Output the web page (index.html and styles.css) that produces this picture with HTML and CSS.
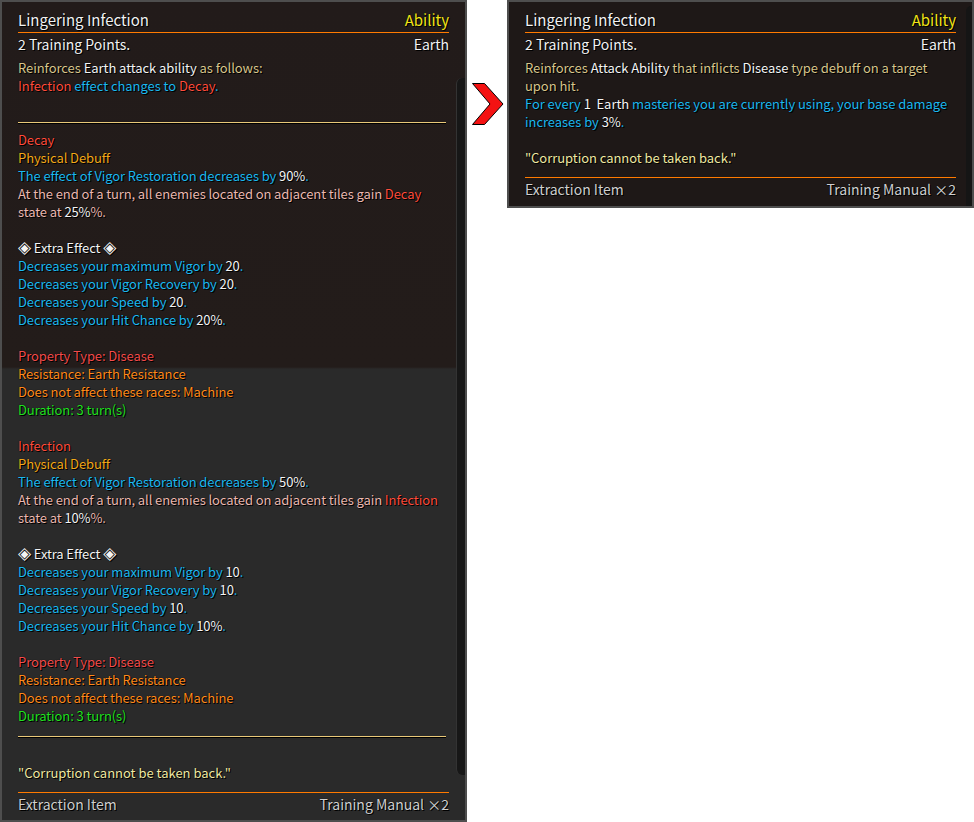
FILE: index.html
```html
<!DOCTYPE html>
<html>
<head>
<meta charset="utf-8">
<link rel="stylesheet" href="styles.css">
</head>
<body>
<div class="page">
  <div class="tip tip-long">
    <div class="scrollbar"></div>
    <div class="head"><span class="title">Lingering Infection</span><span class="kind">Ability</span></div>
    <div class="sub"><span>2 Training Points.</span><span>Earth</span></div>
    <div class="desc">
      <div><span class="tan">Reinforces </span><span class="wh">Earth attack ability</span><span class="tan"> as follows:</span></div>
      <div><span class="red">Infection</span><span class="cy"> effect changes to </span><span class="red">Decay</span><span class="cy">.</span></div>
    </div>
    <div class="rule"></div>
    <div class="body">
      <div class="red">Decay</div>
      <div class="gold">Physical Debuff</div>
      <div><span class="cy">The effect of Vigor Restoration decreases by </span><span class="wh">90%</span><span class="cy">.</span></div>
      <div class="pink">At the end of a turn, all enemies located on adjacent tiles gain <span class="red">Decay</span><br>state at <span class="wh">25%</span>%.</div>
      <div class="blank"></div>
      <div class="wh"><span class="dia">◈</span> Extra Effect <span class="dia">◈</span></div>
      <div><span class="cy">Decreases your maximum Vigor by </span><span class="wh">20</span><span class="cy">.</span></div>
      <div><span class="cy">Decreases your Vigor Recovery by </span><span class="wh">20</span><span class="cy">.</span></div>
      <div><span class="cy">Decreases your Speed by </span><span class="wh">20</span><span class="cy">.</span></div>
      <div><span class="cy">Decreases your Hit Chance by </span><span class="wh">20%</span><span class="cy">.</span></div>
      <div class="blank"></div>
      <div class="prop">Property Type: Disease</div>
      <div class="org">Resistance: Earth Resistance</div>
      <div class="org">Does not affect these races: Machine</div>
      <div class="grn">Duration: 3 turn(s)</div>
      <div class="blank"></div>
      <div class="red">Infection</div>
      <div class="gold">Physical Debuff</div>
      <div><span class="cy">The effect of Vigor Restoration decreases by </span><span class="wh">50%</span><span class="cy">.</span></div>
      <div class="pink">At the end of a turn, all enemies located on adjacent tiles gain <span class="red">Infection</span><br>state at <span class="wh">10%</span>%.</div>
      <div class="blank"></div>
      <div class="wh"><span class="dia">◈</span> Extra Effect <span class="dia">◈</span></div>
      <div><span class="cy">Decreases your maximum Vigor by </span><span class="wh">10</span><span class="cy">.</span></div>
      <div><span class="cy">Decreases your Vigor Recovery by </span><span class="wh">10</span><span class="cy">.</span></div>
      <div><span class="cy">Decreases your Speed by </span><span class="wh">10</span><span class="cy">.</span></div>
      <div><span class="cy">Decreases your Hit Chance by </span><span class="wh">10%</span><span class="cy">.</span></div>
      <div class="blank"></div>
      <div class="prop">Property Type: Disease</div>
      <div class="org">Resistance: Earth Resistance</div>
      <div class="org">Does not affect these races: Machine</div>
      <div class="grn">Duration: 3 turn(s)</div>
    </div>
    <div class="rule rule-end"></div>
    <div class="quote">"Corruption cannot be taken back."</div>
    <div class="foot"><span>Extraction Item</span><span>Training Manual ×2</span></div>
  </div>

  <div class="arrow">
    <svg width="34" height="44" viewBox="0 0 34 44">
      <polygon points="1.5,1.5 13.5,1.5 32,22 13.5,42.5 1.5,42.5 19,22" fill="#f41212" stroke="#000" stroke-width="1"/>
    </svg>
  </div>

  <div class="tip tip-short">
    <div class="sidebar"></div>
    <div class="head"><span class="title">Lingering Infection</span><span class="kind">Ability</span></div>
    <div class="sub"><span>2 Training Points.</span><span>Earth</span></div>
    <div class="desc">
      <div><span class="tan">Reinforces </span><span class="wh">Attack Ability</span><span class="tan"> that inflicts </span><span class="wh">Disease</span><span class="tan"> type debuff on a target<br>upon hit.</span></div>
      <div><span class="cy">For every </span><span class="wh">1&nbsp; Earth</span><span class="cy"> masteries you are currently using, your base damage<br>increases by </span><span class="wh">3%</span><span class="cy">.</span></div>
      <div class="blank"></div>
      <div class="quote-in">"Corruption cannot be taken back."</div>
    </div>
    <div class="foot foot-short"><span>Extraction Item</span><span>Training Manual ×2</span></div>
  </div>
</div>
</body>
</html>
```

FILE: styles.css
```css
* { box-sizing: border-box; }
html, body { margin: 0; padding: 0; background: #ffffff; }
body {
  font-family: "Noto Sans CJK KR", "Noto Sans", sans-serif;
  font-size: 13px;
  color: #e6e6e6;
}
.page {
  display: flex;
  align-items: flex-start;
  width: 974px;
  height: 822px;
}
.tip {
  position: relative;
  width: 467px;
  border: 2px solid #4e4e4e;
  padding: 7px 16px 0 16px;
  text-shadow: 1px 1px 0 #000, 0 0 1px #000;
}
.tip-long {
  height: 822px;
  background: linear-gradient(#221b1a 0, #231c1a 365px, #2a2a2a 367px, #2a2a2a 100%);
}
.tip-short {
  height: 208px;
  margin-left: 1px;
  background: #1e1817;
}
.scrollbar {
  position: absolute;
  right: 0;
  top: 76px;
  width: 9px;
  height: 697px;
  background: #171717;
  border-radius: 6px 0 0 6px;
  border-left: 1px solid #333;
}
.sidebar {
  position: absolute;
  right: 0;
  top: 4px;
  bottom: 0;
  width: 6px;
  background: #151515;
  border-radius: 5px 0 0 0;
}
.head {
  display: flex;
  justify-content: space-between;
  align-items: baseline;
  height: 24px;
  line-height: 22px;
  border-bottom: 1px solid #ff7a00;
}
.title { font-size: 15px; color: #f2f2f2; }
.kind { font-size: 15px; color: #f2e418; }
.sub {
  display: flex;
  justify-content: space-between;
  line-height: 22px;
  font-size: 14px;
  color: #f2f2f2;
}
.desc {
  margin-top: 4px;
  line-height: 18px;
  letter-spacing: -0.05px;
}
.rule {
  height: 1px;
  background: #e9c878;
  margin: 27px 3px 8px 0;
  box-shadow: 0 1px 0 #000;
}
.rule-end { margin: 11px 3px 0 0; }
.body { line-height: 18px; letter-spacing: -0.1px; }
.blank { height: 18px; }
.dia {
  font-family: "DejaVu Sans", sans-serif;
  font-size: 17px;
  line-height: 10px;
  color: #f4f4f4;
}
.quote {
  margin-top: 27px;
  line-height: 18px;
  color: #efe8a2;
}
.quote-in { color: #efe8a2; }
.foot {
  display: flex;
  justify-content: space-between;
  margin-top: 10px;
  border-top: 1px solid #ff7a00;
  line-height: 22px;
  font-size: 14px;
  color: #cfcfcf;
}
.foot-short { margin-top: 10px; }
.arrow {
  width: 39px;
  display: flex;
  justify-content: center;
  padding-top: 82px;
  padding-left: 3px;
}
.tan { color: #d8c58c; }
.wh { color: #f4f4f4; }
.red { color: #ff4c3c; }
.cy { color: #1cb8f0; }
.gold { color: #f2a81a; }
.pink { color: #eab8b0; }
.prop { color: #f24c4c; }
.org { color: #ff8a1c; }
.grn { color: #22e022; }
```
